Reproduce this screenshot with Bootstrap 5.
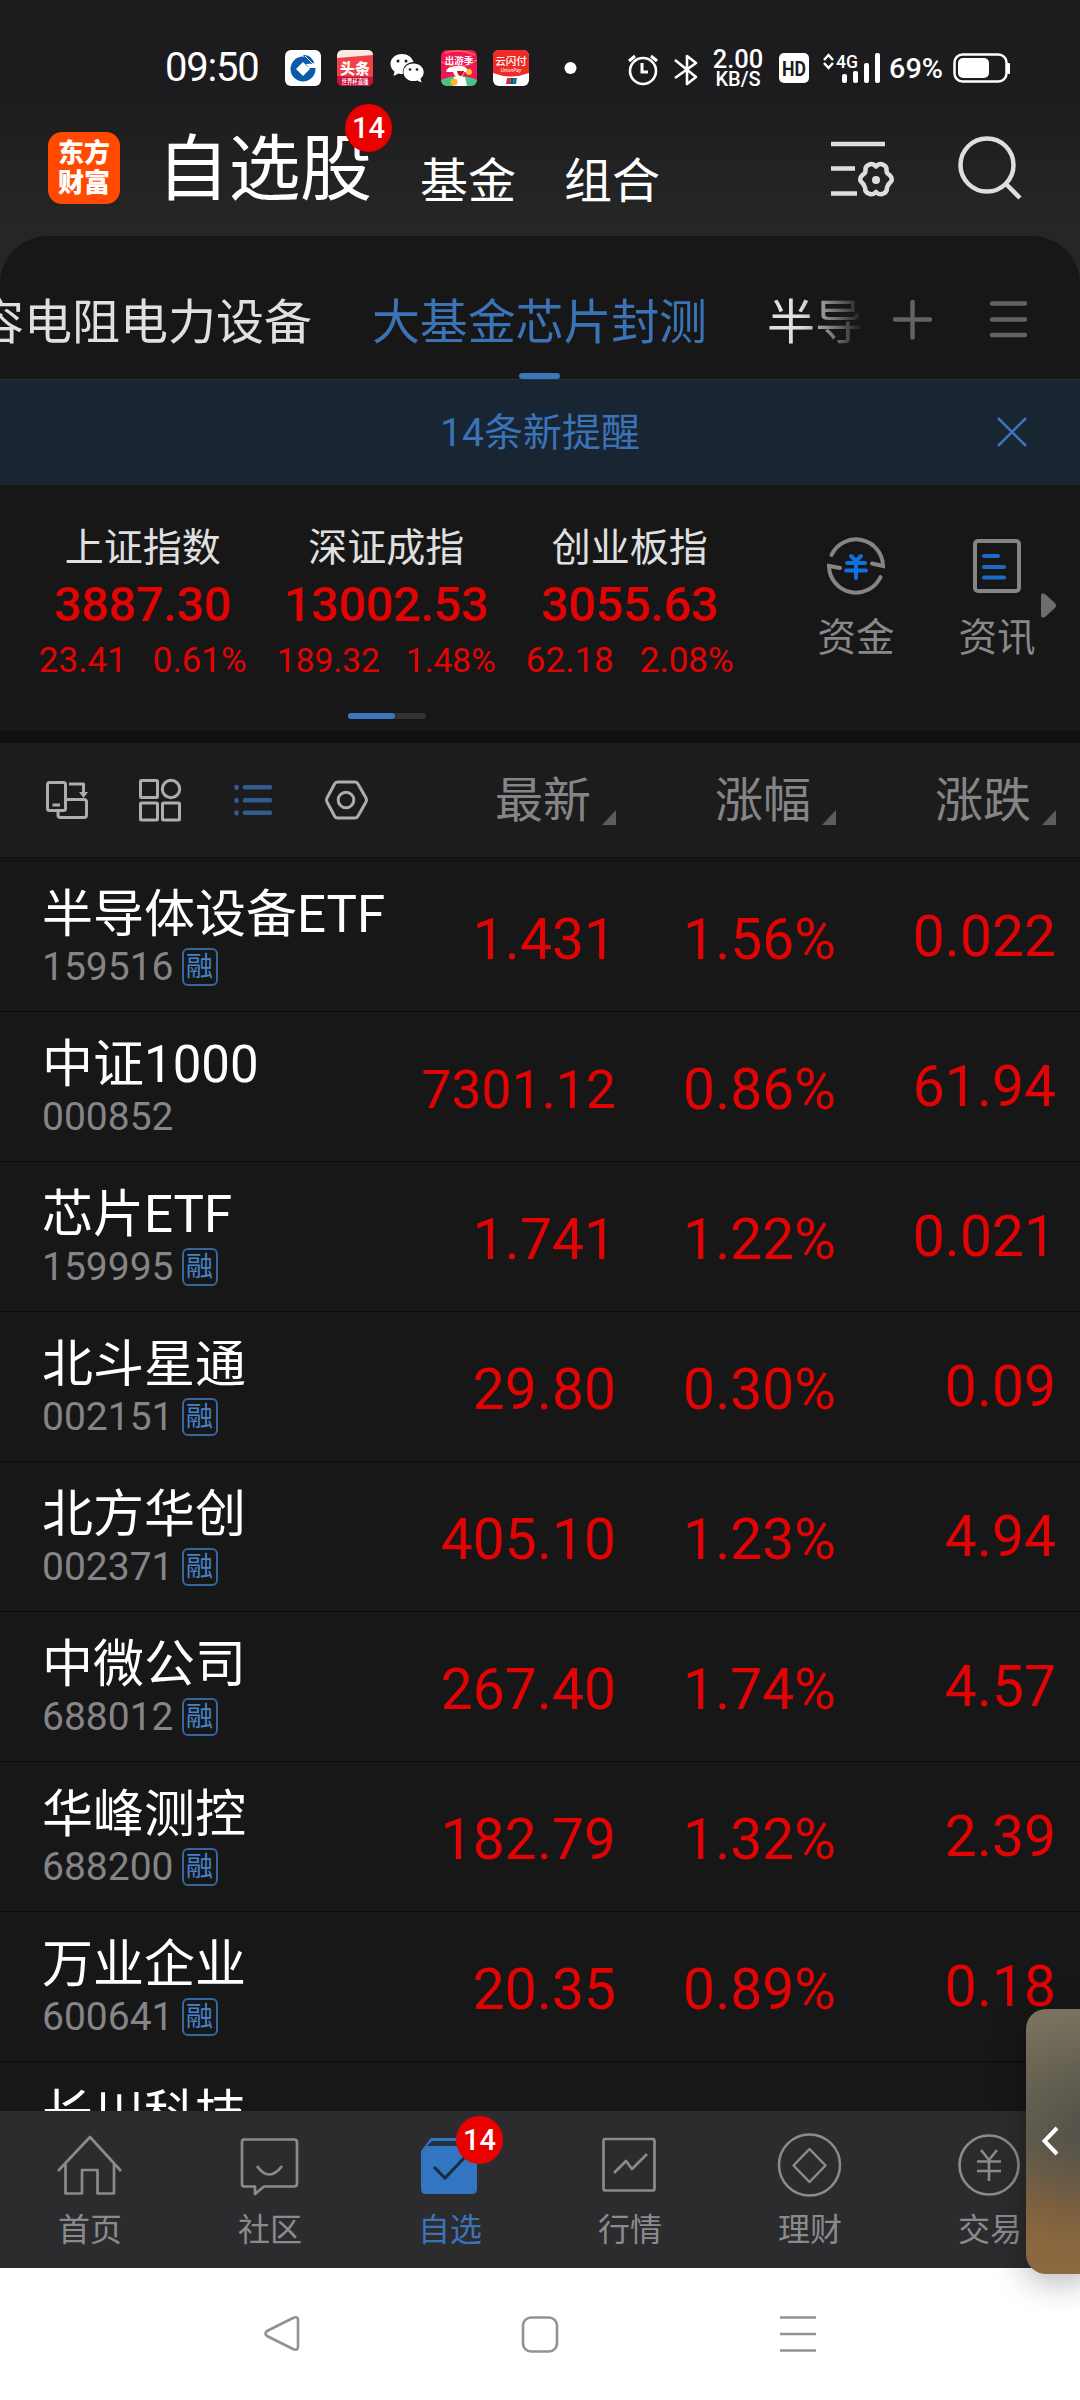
<!DOCTYPE html>
<html lang="zh-CN">
<head>
<meta charset="utf-8">
<meta name="viewport" content="width=device-width, initial-scale=1">
<title>自选股</title>
<link href="https://cdn.jsdelivr.net/npm/bootstrap@5.3.0/dist/css/bootstrap.min.css" rel="stylesheet">
<style>
body{width:1080px;height:2400px;overflow:hidden;background:#171717;color:#e0e0e0;font-family:Roboto,"Noto Sans CJK SC",sans-serif;font-weight:400;line-height:1}
svg{display:block;flex:none}
.top-area{height:285px;margin-bottom:-49px;background:linear-gradient(#1c1c1e 0,#1c1c1e 90px,#262626 225px)}
.status{height:112px;padding:48px 68px 24px 165px;color:#fff}
.clock{width:120px;font-size:40px;letter-spacing:-1.2px;line-height:40px}
.app-ico{width:36px;margin-right:16px}
.net-speed{width:52px;margin-left:13px;font-weight:500;text-align:center}
.net-speed div:first-child{font-size:25.5px;line-height:22px}
.net-speed div:last-child{font-size:20px;line-height:18px}
.header{height:124px;padding-left:48px;color:#fff}
.logo{width:72px;height:72px;margin-top:20px;border-radius:14px;background:#ff4a00;font-weight:900;font-size:26px;line-height:30px;padding-top:6px;text-align:center}
.title{width:218px;font-size:72px;line-height:80px;margin:18px 0 0 37px;letter-spacing:-.5px}
.sub-title{font-size:48px;line-height:60px;margin-top:40px}
.count{width:47px;height:48px;border-radius:50%;background:#eb0000;color:#fff;font-size:29px;font-weight:500;line-height:49px;text-align:center;letter-spacing:0}
.title .count{left:188px;top:-26px}
.panel{height:143px;border-radius:48px 48px 0 0;background:#171717;position:relative;overflow:hidden}
.tab-strip{width:864px;height:143px;overflow:hidden;font-size:48px;line-height:60px;padding-top:57px;white-space:nowrap;-webkit-mask-image:linear-gradient(90deg,#000 800px,transparent 864px);mask-image:linear-gradient(90deg,#000 800px,transparent 864px)}
.tab-strip span:first-child{margin-left:-24px}
.tab-strip span{margin-right:60px}
.accent{color:#3a73b6}
.tab-strip .accent{letter-spacing:-.15px}
.tab-line{left:519px;bottom:0;width:41px;height:6px;border-radius:3px;background:#3a76bd}
.notice{height:106px;border-top:1px solid #2b2f30;background:#192533;font-size:39px;padding-top:2px}
.notice svg{right:52px;top:37px}
.indexes{height:246px;padding:0 0 0 21px}
.idx{width:243.5px;text-align:center;padding-top:40px}
.idx-name{font-size:39px;line-height:46px}
.idx-val{font-size:49px;line-height:54px;font-weight:500;margin-top:7px;letter-spacing:-.5px}
.idx-sub{font-size:35px;line-height:40px;margin-top:9px;gap:26px}
.idx-sub-long{font-size:33.5px}
.up{color:#e20404}
.pager{left:348px;top:228px;width:78px;height:6px;border-radius:3px;background:#323232}
.pager i{display:block;width:47px;height:6px;border-radius:3px;background:#3a76bd}
.quick{width:141px;color:#88888a;font-size:38.5px;line-height:44px;padding-top:48px}
.quick div{margin-top:19px}
.split{height:12px;background:#111}
.tools{height:115px;background:#1c1c1c;border-bottom:1px solid #0e0e0e;font-size:48px;color:#858587}
.tool-icons{width:398px;padding-left:44px}
.col-head{height:114px;line-height:115px;padding-right:25px}
.col-head::after{content:"";position:absolute;right:0;top:67px;border-left:14px solid transparent;border-bottom:15px solid #5d5d5f}
.stocks{height:1253px;overflow:hidden;padding-top:3px}
.stock{height:150px;border-top:1px solid #0c0c0c}
.s-name{width:400px;padding:23px 0 0 42px;white-space:nowrap}
.s-title{font-size:51px;line-height:60px;color:#fff}
.s-code{font-size:39px;line-height:38px;margin-top:3px;color:#858587;gap:8px}
.rong{width:36px;height:38px;border:2px solid #35659c;border-radius:6px;color:#4684cb;font-size:27px;line-height:34px;text-align:center}
.num{font-size:57px;line-height:60px;text-align:right}
.num-fit{font-size:53.5px}
.n1{width:216px;padding-top:48px}.n2{width:220px;padding-top:48px}.n3{width:220px;padding-top:45px}
.bottom{height:157px;background:#2c2c2e;color:#8b8b8e;font-size:32px}
.b-item{width:180px;flex:none;padding-top:20px}
.b-item div.lab{line-height:40px;margin-top:5px}
.sys{height:132px;background:#fff}
.drawer{left:1026px;top:2009px;width:64px;height:265px;border-radius:20px 0 0 20px;background:radial-gradient(circle at 100% 45%,rgba(60,66,66,.55),transparent 75%),linear-gradient(#7b735f 0,#6b6350 50%,#87653f 75%,#8c6940 100%);box-shadow:0 6px 34px rgba(0,0,0,.32)}
</style>
<script src="https://cdn.jsdelivr.net/npm/bootstrap@5.3.0/dist/js/bootstrap.bundle.min.js"></script>
</head>
<body class="position-relative m-0">
<header class="top-area">
  <div class="status d-flex align-items-center">
    <div class="clock">09:50</div>
    <svg class="app-ico" height="36" viewBox="0 0 36 36"><rect width="36" height="36" rx="6" fill="#fff"/><circle cx="18" cy="19" r="12.5" fill="#0a5cab"/><path d="M18 12l7 7-7 7-7-7z" fill="#fff"/><path d="M21 14l12-1v5H24z" fill="#fff"/><path d="M18 5q7-1 11 7l-3 2z" fill="#0a5cab"/><path d="M20 6l8 8" stroke="#fff" stroke-width="1"/></svg>
    <svg class="app-ico" height="36" viewBox="0 0 36 36"><rect width="36" height="36" rx="6" fill="#f04147"/><path d="M0 6q0-6 6-6h24q6 0 6 5L0 8z" fill="#fbe9e4"/><path d="M0 26l36 1v3q0 6-6 6H6q-6 0-6-6z" fill="#c5113c"/><text x="18" y="23.500" text-anchor="middle" font-size="15" font-weight="900" fill="#fff">头条</text><text x="18" y="34.200" text-anchor="middle" font-size="6.500" font-weight="500" fill="#fff" textLength="27" lengthAdjust="spacingAndGlyphs">世界杯直播</text></svg>
    <svg class="app-ico" height="36" viewBox="0 0 36 36"><path d="M13 4C6 4 1.500 8.500 1.500 14c0 3.200 1.600 5.800 4 7.500L4.500 26l5-2.600q2 .6 4.500.5C13 17 18 12 24.500 12 23 7 18.500 4 13 4z" fill="#fff"/><path d="M24.500 13.500c-6 0-10 4-10 8.700 0 5 4.300 8.800 10 8.800q2 0 3.700-.6l4.300 2.200-1-4c2-1.600 3.200-3.800 3.200-6.400 0-4.700-4.200-8.700-10.200-8.700z" fill="#fff"/><g fill="#1c1c1e"><circle cx="9" cy="11" r="1.500"/><circle cx="17" cy="11" r="1.500"/><circle cx="21" cy="19.500" r="1.300"/><circle cx="28" cy="19.500" r="1.300"/></g></svg>
    <svg class="app-ico" height="36" viewBox="0 0 36 36"><clipPath id="rc"><rect width="36" height="36" rx="6"/></clipPath><g clip-path="url(#rc)"><rect width="36" height="36" fill="#ef1757"/><path d="M4 3Q18-2 34 5M0 12q18 10 36-2" stroke="#f36b3c" stroke-width="1.500" fill="none"/><path d="M0 30q18-8 36 0v6H0z" fill="#48c486"/><path d="M11 17q7-3 13 0 4 3 3 6l-4-1q-1 6-5 6t-6-6l-7 0q1-5 6-5z" fill="#fff"/><path d="M13 27h11l2 9H12z" fill="#fff"/><circle cx="28" cy="22" r="3" fill="#ffc62e"/><circle cx="13" cy="32" r="3.500" fill="#ffb52e"/><path d="M16 21h7q-1 5-3.500 5T16 21z" fill="#c81818"/><text x="18" y="14" text-anchor="middle" font-size="9.500" font-weight="700" fill="#fff">出游季</text></g></svg>
    <svg class="app-ico" height="36" viewBox="0 0 36 36"><rect width="36" height="36" rx="6" fill="#fff"/><path d="M0 23V6q0-6 6-6h24q6 0 6 6v17q-18 7-36 0z" fill="#ef2b26"/><text x="18" y="15" text-anchor="middle" font-size="10.500" font-weight="500" fill="#fff">云闪付</text><text x="18" y="21.500" text-anchor="middle" font-size="5" font-style="italic" fill="#fff">UnionPay</text><path d="M14 28h4l-1 6h-4z" fill="#d42b35"/><path d="M18 28h3l-1 6h-3z" fill="#174a82"/><path d="M21 28h3l-1 6h-3z" fill="#087a78"/></svg>
    <svg width="50" height="36" viewBox="545 50 50 36" style="margin-right:33px"><circle cx="570.500" cy="68" r="6" fill="#fff"/></svg>
    <svg width="71" height="36" viewBox="628 50 71 36" fill="none" stroke="#fff" stroke-width="2.600"><circle cx="643" cy="71" r="13"/><path d="M642 63v9h6" stroke-width="3"/><path d="M629 61l6-5M657 61l-6-5" stroke-width="3"/><path d="M675 60l21 17-9 7V56l9 7-21 15" stroke-linejoin="round"/></svg>
    <div class="net-speed"><div>2.00</div><div>KB/S</div></div>
    <svg width="246" height="40" viewBox="764 48 246 40" class="me-n5" fill="#fff"><rect x="779" y="53" width="30" height="30" rx="5"/><text x="794" y="75.500" font-size="21" font-weight="700" text-anchor="middle" fill="#1c1c1e" textLength="24" lengthAdjust="spacingAndGlyphs">HD</text><path d="M824 60l4.500-5 4.500 5M824 63l4.500 5 4.500-5" fill="none" stroke="#fff" stroke-width="2.500"/><text x="836" y="67.500" font-size="18.500" font-weight="500" textLength="22" lengthAdjust="spacingAndGlyphs">4G</text><rect x="842" y="74" width="5" height="9" rx="2"/><rect x="853" y="71" width="5" height="12" rx="2"/><rect x="864" y="63" width="5" height="20" rx="2"/><rect x="875" y="53" width="5" height="30" rx="2"/><text x="889" y="77.500" font-size="28.500" font-weight="500" textLength="54" lengthAdjust="spacingAndGlyphs">69%</text><rect x="954.500" y="54.500" width="52" height="27" rx="8" fill="none" stroke="#fff" stroke-width="2.500"/><rect x="958" y="58" width="31" height="20" rx="5"/><rect x="1007" y="63" width="3" height="11" rx="1"/></svg>
  </div>
  <div class="header d-flex align-items-start">
    <div class="logo">东方<br>财富</div>
    <div class="title position-relative">自选股<span class="count position-absolute">14</span></div>
    <div class="sub-title" style="margin-left:45px">基金</div>
    <div class="sub-title" style="margin-left:48px">组合</div>
    <svg width="66" height="60" viewBox="829 138 66 60" style="margin:26px 61px 0 169px" fill="none" stroke="#dedede" stroke-width="4.500"><path d="M831 144h54M831 168.500h24M831 193.500h26"/><path d="M876 166.500q3.500-4 7.500-1.500 3.500 1.500 3 5.500 0 3 3 4.500 3 2.500 2 6-3.500 3-4.500 6.500 0 5-3.500 6-4 2-7.500-1.500-3.500 3.500-7.500 1.500-3.500-1-3.500-6-1-3.500-4.500-6.500-1-3.500 2-6 3-1.500 3-4.500-.5-4 3-5.500 4-2.500 7.500 1.500z" stroke-linejoin="round"/><circle cx="876" cy="180" r="4" fill="#dedede" stroke="none"/></svg>
    <svg width="66" height="66" viewBox="956 134 66 66" style="margin-top:22px" fill="none" stroke="#dedede" stroke-width="4.500"><circle cx="987" cy="165" r="26.500"/><path d="M1006 184l14 14"/></svg>
  </div>
</header>
<nav class="panel d-flex">
  <div class="tab-strip"><span>容电阻电力设备</span><span class="accent">大基金芯片封测</span><span>半导</span></div>
  <svg width="160" height="60" viewBox="880 290 160 60" style="margin:54px 0 0 16px" fill="none" stroke="#626262" stroke-width="4.500" stroke-linecap="round"><path d="M895 319.500h35M912.500 302v35.500M992 303.500h33M992 319.500h33M992 335h33"/></svg>
  <div class="tab-line position-absolute"></div>
</nav>
<div class="notice d-flex align-items-center justify-content-center position-relative accent">14条新提醒
  <svg class="position-absolute" width="32" height="32" viewBox="0 0 32 32" stroke="#3a76bd" stroke-width="2.600"><path d="M2 1l28 28M30 1L2 29"/></svg>
</div>
<section class="indexes d-flex position-relative">
  <div class="idx"><div class="idx-name">上证指数</div><div class="idx-val up">3887.30</div><div class="idx-sub up d-flex justify-content-center"><span>23.41</span><span>0.61%</span></div></div>
  <div class="idx"><div class="idx-name">深证成指</div><div class="idx-val up">13002.53</div><div class="idx-sub idx-sub-long up d-flex justify-content-center"><span>189.32</span><span>1.48%</span></div></div>
  <div class="idx"><div class="idx-name">创业板指</div><div class="idx-val up">3055.63</div><div class="idx-sub up d-flex justify-content-center"><span>62.18</span><span>2.08%</span></div></div>
  <div class="quick d-flex flex-column align-items-center" style="margin-left:34px">
    <svg width="64" height="64" viewBox="824 533 64 64" fill="none" stroke="#858585" stroke-width="4"><path d="M831.500 555A27 27 0 0 1 883 566l-11-2.500" stroke-linecap="round"/><path d="M880.500 577A27 27 0 0 1 829 566l11 2" stroke-linecap="round"/><path d="M851 556l5 5 5-5M847 563h18M846 570.500h20M856 562v16" stroke="#1270dc" stroke-linecap="round"/></svg>
    <div>资金</div>
  </div>
  <div class="quick d-flex flex-column align-items-center">
    <svg width="64" height="64" viewBox="965 533 64 64" fill="none" stroke="#858585" stroke-width="4"><rect x="975" y="541" width="44" height="50" rx="3"/><path d="M984 556h14M984 567h20M984 577.500h20" stroke="#1b6cc8" stroke-linecap="round"/></svg>
    <div>资讯</div>
  </div>
  <svg class="position-absolute" style="left:1040px;top:107px" width="18" height="28" viewBox="0 0 18 28"><path d="M1 4q0-4 4-2l10 9q2 3 0 5L5 25q-3 2-4-1z" fill="#6d6d6d"/></svg>
  <div class="pager position-absolute"><i></i></div>
</section>
<div class="split"></div>
<div class="tools d-flex">
  <div class="tool-icons d-flex align-items-center">
    <svg width="330" height="46" viewBox="44 777 330 46" fill="none" stroke="#adadad" stroke-width="3" stroke-linejoin="round"><rect x="47.500" y="782.500" width="18" height="28" rx="2"/><path d="M52.500 805h7.500M69 784h14.500v9M58 811v4q0 2.500 2.500 2.500H84q2.500 0 2.500-2.500v-13q0-2.500-2.500-2.500H66"/><path d="M79 792h9l-4.500 6z" fill="#adadad" stroke="none"/><rect x="140.500" y="780.500" width="17" height="17" rx="1"/><circle cx="171" cy="789" r="8.700"/><rect x="140.500" y="803" width="17" height="17" rx="1"/><rect x="162.500" y="803" width="17" height="17" rx="1"/><path d="M236.500 787v.8M236.500 800v.8M236.500 812.500v.8M245 787.300h25M245 800.300h25M245 812.800h25" stroke="#315a8d" stroke-width="4.600" stroke-linecap="round"/><path d="M337.500 782h17.500q2 0 3 2l8 14q1 2 0 4l-8 14q-1 2-3 2h-17.500q-2 0-3-2l-7.500-14q-1-2 0-4l7.500-14q1-2 3-2z"/><circle cx="346" cy="800" r="7.800"/></svg>
  </div>
  <div class="col-head position-relative text-end" style="width:218px">最新</div>
  <div class="col-head position-relative text-end" style="width:220px">涨幅</div>
  <div class="col-head position-relative text-end" style="width:220px">涨跌</div>
</div>
<main class="stocks">
  <div class="stock d-flex"><div class="s-name"><div class="s-title">半导体设备ETF</div><div class="s-code d-flex"><span>159516</span><span class="rong">融</span></div></div><div class="num n1 up">1.431</div><div class="num n2 up">1.56%</div><div class="num n3 up">0.022</div></div>
  <div class="stock d-flex"><div class="s-name"><div class="s-title">中证1000</div><div class="s-code d-flex"><span>000852</span></div></div><div class="num num-fit n1 up">7301.12</div><div class="num n2 up">0.86%</div><div class="num n3 up">61.94</div></div>
  <div class="stock d-flex"><div class="s-name"><div class="s-title">芯片ETF</div><div class="s-code d-flex"><span>159995</span><span class="rong">融</span></div></div><div class="num n1 up">1.741</div><div class="num n2 up">1.22%</div><div class="num n3 up">0.021</div></div>
  <div class="stock d-flex"><div class="s-name"><div class="s-title">北斗星通</div><div class="s-code d-flex"><span>002151</span><span class="rong">融</span></div></div><div class="num n1 up">29.80</div><div class="num n2 up">0.30%</div><div class="num n3 up">0.09</div></div>
  <div class="stock d-flex"><div class="s-name"><div class="s-title">北方华创</div><div class="s-code d-flex"><span>002371</span><span class="rong">融</span></div></div><div class="num n1 up">405.10</div><div class="num n2 up">1.23%</div><div class="num n3 up">4.94</div></div>
  <div class="stock d-flex"><div class="s-name"><div class="s-title">中微公司</div><div class="s-code d-flex"><span>688012</span><span class="rong">融</span></div></div><div class="num n1 up">267.40</div><div class="num n2 up">1.74%</div><div class="num n3 up">4.57</div></div>
  <div class="stock d-flex"><div class="s-name"><div class="s-title">华峰测控</div><div class="s-code d-flex"><span>688200</span><span class="rong">融</span></div></div><div class="num n1 up">182.79</div><div class="num n2 up">1.32%</div><div class="num n3 up">2.39</div></div>
  <div class="stock d-flex"><div class="s-name"><div class="s-title">万业企业</div><div class="s-code d-flex"><span>600641</span><span class="rong">融</span></div></div><div class="num n1 up">20.35</div><div class="num n2 up">0.89%</div><div class="num n3 up">0.18</div></div>
  <div class="stock d-flex"><div class="s-name"><div class="s-title">长川科技</div></div></div>
</main>
<nav class="bottom d-flex">
  <div class="b-item d-flex flex-column align-items-center"><svg width="70" height="74" viewBox="55 2131 70 74" fill="none" stroke="#8b8b8e" stroke-width="2.700" stroke-linejoin="round"><path d="M58 2171l32-34 31 34M65.500 2164v29.500H82V2170h15.500v23.500H114V2164"/></svg><div class="lab">首页</div></div>
  <div class="b-item d-flex flex-column align-items-center"><svg width="70" height="74" viewBox="235 2131 70 74" fill="none" stroke="#8b8b8e" stroke-width="2.700" stroke-linejoin="round"><path d="M244 2139.500h50q3 0 3 3v41q0 3-3 3h-30l-9 7.500v-7.500h-11q-2 0-2-3v-41q0-3 2-3zM257 2166q12 17 25 0"/></svg><div class="lab">社区</div></div>
  <div class="b-item d-flex flex-column align-items-center accent position-relative"><svg width="70" height="74" viewBox="415 2131 70 74"><path d="M421 2151v38q0 5 5 5h46q5 0 5-5v-39l-9-12h-37z" fill="#3275c2"/><path d="M427 2146l5-5h34l5 5z" fill="#26303d"/><path d="M434 2167l11 11 22-23" fill="none" stroke="#1b2b40" stroke-width="3"/></svg><span class="count position-absolute" style="left:96px;top:5px">14</span><div class="lab">自选</div></div>
  <div class="b-item d-flex flex-column align-items-center"><svg width="70" height="74" viewBox="595 2131 70 74" fill="none" stroke="#8b8b8e" stroke-width="2.700" stroke-linejoin="round"><rect x="603.500" y="2139" width="51" height="51.500" rx="2"/><path d="M614 2173l12-12 6 8 15-15"/></svg><div class="lab">行情</div></div>
  <div class="b-item d-flex flex-column align-items-center"><svg width="70" height="74" viewBox="775 2131 70 74" fill="none" stroke="#8b8b8e" stroke-width="2.500" stroke-linejoin="round"><circle cx="809.500" cy="2165" r="30.500"/><path d="M809.500 2149l16 16.500-16 16.500-16-16.500z"/></svg><div class="lab">理财</div></div>
  <div class="b-item d-flex flex-column align-items-center"><svg width="70" height="74" viewBox="955 2131 70 74" fill="none" stroke="#8b8b8e" stroke-width="2.600"><circle cx="989" cy="2165" r="29.500"/><path d="M981 2150l8 10 8-10M977 2161.500h24M977 2171h24M989 2160v21"/></svg><div class="lab">交易</div></div>
</nav>
<footer class="sys d-flex justify-content-center align-items-center">
  <svg width="560" height="44" viewBox="260 2312 560 44" fill="none" stroke="#929292" stroke-width="2.600" stroke-linejoin="round"><path d="M267 2331l26-13q5-2 5 2v27q0 4-5 2l-26-13q-3-2 0-5z"/><rect x="523" y="2317.500" width="34" height="34" rx="8"/><path d="M780 2317.500h36M780 2334h36M780 2350.500h36"/></svg>
</footer>
<div class="drawer position-absolute"><svg width="64" height="265" viewBox="1026 2009 64 265"><path d="M1057 2128l-12.500 13 12.500 13" fill="none" stroke="#fff" stroke-width="4"/></svg></div>
</body>
</html>
